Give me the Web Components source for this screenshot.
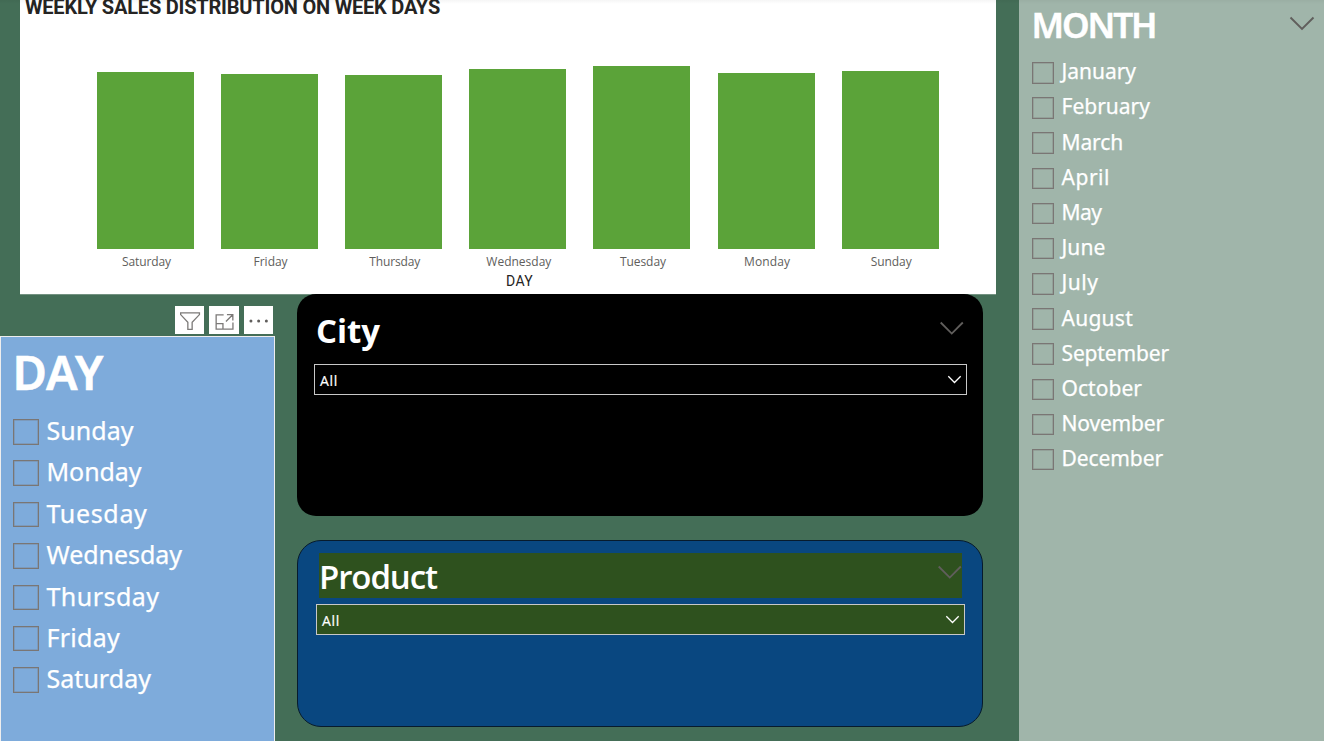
<!DOCTYPE html>
<html lang="en">
<head>
<meta charset="utf-8">
<title>Weekly sales</title>
<style>html,body{margin:0;height:100%;overflow:hidden;background:#446e57}</style>
</head>
<body>
<sales-report></sales-report>
<script>
const define = (name, html, setup) => customElements.define(name, class extends HTMLElement {
  connectedCallback() {
    if (this.shadowRoot) return;
    const root = this.attachShadow({mode: 'open'});
    const t = document.createElement('template');
    t.innerHTML = typeof html === 'function' ? html(this) : html;
    root.append(t.content.cloneNode(true));
    if (setup) setup(this, root);
  }
});

/* A single line of text whose tracking is tuned to a requested width. */
define('fit-text', `<style>:host{display:block;white-space:nowrap}span{display:block;width:max-content}</style><span><slot></slot></span>`, (el, root) => {
  const s = root.querySelector('span'), w = +el.getAttribute('w');
  const n = el.textContent.length, now = s.getBoundingClientRect().width;
  if (w && n) s.style.letterSpacing = ((w - now) / n).toFixed(3) + 'px';
});

define('chevron-icon', `<style>:host{display:block;line-height:0}svg{display:block;width:100%;height:100%;overflow:visible}</style>
<svg viewBox="0 0 24 13" fill="none" stroke="currentColor"><path d="M.5.5 12 12 23.5.5" style="stroke-width:var(--sw,1.9)"/></svg>`);

define('check-item', el => `<style>
:host{display:flex;align-items:flex-start;height:var(--pitch)}
i{box-sizing:border-box;flex:none;width:var(--box);height:var(--box);border:1px solid #7a7674;box-shadow:inset 0 0 0 .5px #7a767499}
fit-text{margin-left:var(--gap);margin-top:var(--shift);font:400 var(--fs)/var(--box) "Noto Sans",sans-serif;color:#fff;-webkit-text-stroke:.25px #fff}
</style><i></i><fit-text w="${el.getAttribute('w')}">${el.getAttribute('label')}</fit-text>`);

define('bar-column', el => `<style>
:host{display:flex;flex-direction:column;justify-content:flex-end;align-items:center;width:124.14px}
b{display:block;width:97px;height:${el.getAttribute('h')}px;background:#5ba339}
fit-text{margin:4px 0 0 2px;font:12px/18px "Open Sans",sans-serif;color:#605e5c}
</style><b></b><fit-text w="${el.getAttribute('w')}">${el.getAttribute('label')}</fit-text>`);

define('sales-chart', () => {
  const d = [['Saturday',177,49],['Friday',175,34],['Thursday',174.5,51],['Wednesday',180,65],['Tuesday',183.3,46],['Monday',176,46],['Sunday',178,41]];
  return `<style>
:host{display:block;box-sizing:border-box;width:976px;height:294px;background:#fff;margin-left:20px;box-shadow:0 .5px 0 #ffffff80}
.t{font:700 20px/15px Roboto,sans-serif;color:#252423;margin:0 0 0 5px;height:19px}
.p{display:flex;height:252px;padding-left:63.4px}
.a{font:14px/18px Roboto,sans-serif;color:#252423;width:27px;margin:1px 0 0 486px}
</style><fit-text class="t" w="415">WEEKLY SALES DISTRIBUTION ON WEEK DAYS</fit-text>
<div class="p">${d.map(([l,h,w]) => `<bar-column label="${l}" h="${h}" w="${w}"></bar-column>`).join('')}</div>
<fit-text class="a" w="27">DAY</fit-text>`;
});

define('visual-toolbar', `<style>
:host{display:flex;gap:5px;height:28px;padding:12px 0 0 175px}
span{width:29.3px;height:28px;background:#fff}svg{display:block;width:100%;height:28px}
g{fill:none;stroke:#7c7a78;stroke-width:1.3}
</style>
<span><svg viewBox="0 0 29 28"><g><path d="M5.5 6.8H24.3V8.6L17 16.3V23.3H12.7V16.3L5.5 8.6Z"/></g></svg></span>
<span><svg viewBox="0 0 29 28"><g><path d="M14.5 8.8H7V23.2H23.8V16.5M7 17.7H13.8V23.2M16.8 15.5 23.5 8.7M17.8 8.7H23.7V14.5"/></g></svg></span>
<span><svg viewBox="0 0 29 28"><g style="fill:#605e5c;stroke:none"><circle cx="6.8" cy="15" r="1.5"/><circle cx="14.5" cy="15" r="1.5"/><circle cx="22.2" cy="15" r="1.5"/></g></svg></span>`);

define('day-slicer', () => `<style>
:host{display:block;box-sizing:border-box;width:275px;height:405px;margin-top:2px;background:#7eabdb;border:1px solid #eee;border-bottom:0;padding-left:12px;
--box:25.5px;--pitch:41.4px;--gap:8px;--fs:25px;--shift:-1px}
h2{margin:0;height:82px;font:600 47px/64px "Noto Sans",sans-serif;color:#fff;padding-top:3px;box-sizing:border-box}
h2 fit-text{margin-left:-.5px;-webkit-text-stroke:.6px #fff}
</style><h2><fit-text w="91">DAY</fit-text></h2>
${[['Sunday',87],['Monday',95],['Tuesday',101],['Wednesday',135.5],['Thursday',113],['Friday',73.5],['Saturday',104.5]].map(([l,w]) => `<check-item label="${l}" w="${w}"></check-item>`).join('')}`);

define('month-slicer', () => `<style>
:host{display:block;box-sizing:border-box;width:305.5px;height:741px;background:#a0b5aa;padding-left:13.5px;
--box:21.5px;--pitch:35.18px;--gap:8px;--fs:21px;--shift:-.7px}
header{display:flex;justify-content:space-between;height:62px;padding-right:10px}
h2{margin:0 0 0 -.5px;font:600 35px/50px "Noto Sans",sans-serif;color:#fff;-webkit-text-stroke:.5px #fff}
chevron-icon{width:24px;height:13px;margin-top:17px;color:#605e5c}
</style><header><h2><fit-text w="124">MONTH</fit-text></h2><chevron-icon></chevron-icon></header>
${[['January',74.5],['February',88.5],['March',61.5],['April',48.5],['May',40],['June',44],['July',37],['August',71.5],['September',107.5],['October',80.5],['November',102.5],['December',101.5]].map(([l,w]) => `<check-item label="${l}" w="${w}"></check-item>`).join('')}`);

define('drop-box', `<style>
:host{display:flex;box-sizing:border-box;justify-content:space-between;align-items:center;height:31px;border:1px solid #c8c8c8;padding:0 5.5px 0 5px;color:#fff;font:14px/20px "Open Sans",sans-serif}
chevron-icon{width:13px;height:7px;--sw:2.4px}
fit-text{margin-top:2px;-webkit-text-stroke:.2px #fff}
</style><fit-text w="18">All</fit-text><chevron-icon></chevron-icon>`);

define('slicer-card', el => `<style>
:host{display:block;box-sizing:border-box;width:686px}
header{display:flex;justify-content:space-between;box-sizing:border-box}
h2{margin:0;color:#fff;font:600 33px/44px "Open Sans",sans-serif}
chevron-icon{width:23.5px;height:12.5px;color:#605e5c}
:host([kind=city]){height:222px;border-radius:19px;background:#000;padding:15px 16px 0 17px}
:host([kind=city]) header{height:55px;padding:0 4px 0 2px}
:host([kind=city]) h2{font-weight:700;line-height:43px}
:host([kind=city]) chevron-icon{margin-top:13px}
:host([kind=product]){height:187px;margin-top:24px;border:1px solid #071b2d;border-radius:24px;background:#094780;padding:12px 17px 0 18px}
:host([kind=product]) header{height:45px;margin:0 3px 6px;background:#2e511e;padding-right:1px}
:host([kind=product]) h2{line-height:47px}
:host([kind=product]) chevron-icon{margin-top:13px}
:host([kind=product]) drop-box{background:#2e511e}
</style><header><h2><fit-text w="${el.getAttribute('w')}">${el.getAttribute('label')}</fit-text></h2><chevron-icon></chevron-icon></header><drop-box></drop-box>`);

define('sales-report', `<style>
:host{display:flex;justify-content:space-between;width:1324px;height:741px;background:#446e57;overflow:hidden;position:relative}
:host::after{content:"";position:absolute;inset:0 0 auto;height:4px;background:linear-gradient(#0000000a,#0000)}
main{width:1018px}.row{display:flex;gap:22px}
</style><main><sales-chart></sales-chart><div class="row"><div class="left"><visual-toolbar></visual-toolbar><day-slicer></day-slicer></div>
<div class="cards"><slicer-card kind="city" label="City" w="64"></slicer-card><slicer-card kind="product" label="Product" w="118"></slicer-card></div></div></main><month-slicer></month-slicer>`);
</script>
</body>
</html>
